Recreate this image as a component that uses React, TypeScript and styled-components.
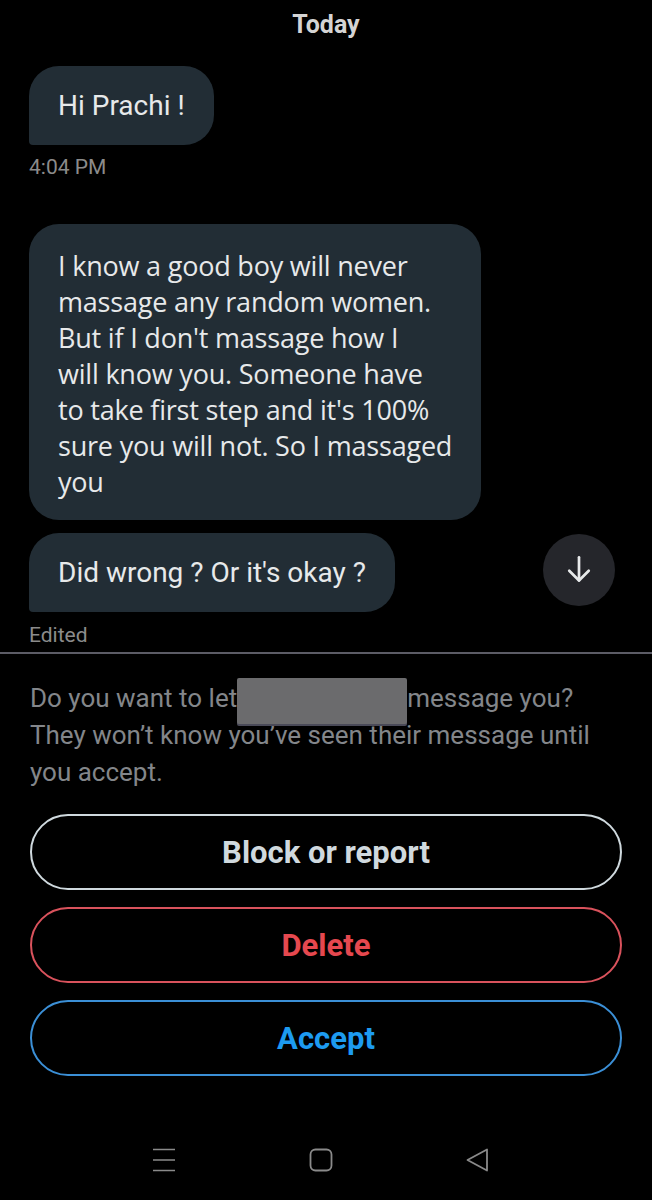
import React from "react";
import styled, { createGlobalStyle } from "styled-components";

const GlobalStyle = createGlobalStyle`
  html, body {
    margin: 0;
    padding: 0;
    background: #000;
  }
  body {
    font-family: Roboto, "Liberation Sans", sans-serif;
    -webkit-font-smoothing: antialiased;
  }
`;

const Screen = styled.div`
  width: 652px;
  height: 1200px;
  background: #000;
  display: flex;
  flex-direction: column;
  overflow: hidden;
`;

const Thread = styled.div`
  display: flex;
  flex-direction: column;
  padding: 0 29px;
`;

const DayLabel = styled.div`
  text-align: center;
  color: #d4d4d4;
  font-weight: 700;
  font-size: 25px;
  line-height: 30px;
  padding-top: 10px;
`;

type BubbleProps = {
  $square?: boolean;
  $wide?: boolean;
};

const Bubble = styled.div<BubbleProps>`
  align-self: flex-start;
  background: #222d35;
  color: #e7e9ea;
  font-size: ${({ $wide }) => ($wide ? "27px" : "28px")};
  line-height: 36px;
  padding: ${({ $wide }) => ($wide ? "24px 29px 20px" : "22px 29px 21px")};
  border-radius: 30px;
  border-bottom-left-radius: ${({ $square }) => ($square ? "4px" : "30px")};
  font-family: ${({ $wide }) =>
    $wide ? `"Open Sans", Roboto, sans-serif` : `Roboto, sans-serif`};
  letter-spacing: ${({ $wide }) => ($wide ? "-0.2px" : "0")};
  white-space: nowrap;
`;

const Meta = styled.div`
  color: #8b8b8b;
  font-size: 21px;
  line-height: 24px;
  margin-top: 10px;
`;

const LastRow = styled.div`
  display: flex;
  align-items: center;
  justify-content: space-between;
  margin-top: 13px;
`;

const ScrollDown = styled.div`
  width: 72px;
  height: 72px;
  border-radius: 50%;
  background: #25262b;
  display: flex;
  align-items: center;
  justify-content: center;
  margin-right: 8px;
  margin-top: -6px;
`;

const Divider = styled.div`
  height: 2px;
  background: #5c5c66;
  margin-top: 5px;
`;

const Request = styled.div`
  padding: 26px 30px 0;
  display: flex;
  flex-direction: column;
`;

const Prompt = styled.p`
  margin: 0;
  color: #83868a;
  font-size: 26px;
  line-height: 37px;
  white-space: nowrap;
`;

const Redact = styled.span`
  position: relative;
  display: inline-block;
  vertical-align: top;
  width: 170px;
  height: 37px;
`;

const RedactBox = styled.span`
  position: absolute;
  left: 0;
  top: -2px;
  width: 170px;
  height: 46px;
  background: #6b6b6d;
  border-radius: 2px;
  box-shadow: 0 2px 0 #4a4a58;
`;

const Actions = styled.div`
  display: flex;
  flex-direction: column;
  gap: 17px;
  margin-top: 23px;
`;

const ActionButton = styled.div<{ $color: string; $text: string }>`
  height: 76px;
  border: 2px solid ${({ $color }) => $color};
  border-radius: 40px;
  box-sizing: border-box;
  display: flex;
  align-items: center;
  justify-content: center;
  color: ${({ $text }) => $text};
  font-weight: 700;
  font-size: 31px;
`;

const NavBar = styled.div`
  margin-top: auto;
  height: 80px;
  display: flex;
  align-items: center;
  justify-content: center;
  gap: 133px;
  padding-right: 10px;
  color: #8a8a8a;
`;

const NavIcon = styled.svg`
  width: 24px;
  height: 24px;
`;

const App = () => (
  <Screen>
    <GlobalStyle />
    <Thread>
      <DayLabel>Today</DayLabel>
      <Bubble $square style={{ marginTop: 26 }}>
        Hi Prachi !
      </Bubble>
      <Meta>4:04 PM</Meta>
      <Bubble $wide style={{ marginTop: 45 }}>
        I know a good boy will never
        <br />
        massage any random women.
        <br />
        But if I don't massage how I
        <br />
        will know you. Someone have
        <br />
        to take first step and it's 100%
        <br />
        sure you will not. So I massaged
        <br />
        you
      </Bubble>
      <LastRow>
        <Bubble $square>Did wrong ? Or it's okay ?</Bubble>
        <ScrollDown>
          <svg width="36" height="36" viewBox="0 0 24 24" fill="none" stroke="#e7e9ea" strokeWidth="1.8" strokeLinecap="round" strokeLinejoin="round">
            <path d="M12 3.5v15.5" />
            <path d="M5.5 12.5L12 19l6.5-6.5" />
          </svg>
        </ScrollDown>
      </LastRow>
      <Meta style={{ marginTop: 11 }}>Edited</Meta>
    </Thread>
    <Divider />
    <Request>
      <Prompt>
        Do you want to let
        <Redact>
          <RedactBox />
        </Redact>
        message you?
        <br />
        They won’t know you’ve seen their message until
        <br />
        you accept.
      </Prompt>
      <Actions>
        <ActionButton $color="#cfd9de" $text="#d0d9de">
          Block or report
        </ActionButton>
        <ActionButton $color="#d9525c" $text="#e5484f">
          Delete
        </ActionButton>
        <ActionButton $color="#3b8fd6" $text="#1d9bf0">
          Accept
        </ActionButton>
      </Actions>
    </Request>
    <NavBar>
      <NavIcon viewBox="0 0 24 24" fill="none" stroke="currentColor" strokeWidth="1.6">
        <path d="M1 1.5h22M1 12h22M1 22.5h22" />
      </NavIcon>
      <NavIcon viewBox="0 0 24 24" fill="none" stroke="currentColor" strokeWidth="1.8">
        <rect x="1.5" y="1.5" width="21" height="21" rx="5" />
      </NavIcon>
      <NavIcon viewBox="0 0 24 24" fill="none" stroke="currentColor" strokeWidth="1.8" strokeLinejoin="round">
        <path d="M21 1.5v21L1.5 12z" />
      </NavIcon>
    </NavBar>
  </Screen>
);

export default App;
